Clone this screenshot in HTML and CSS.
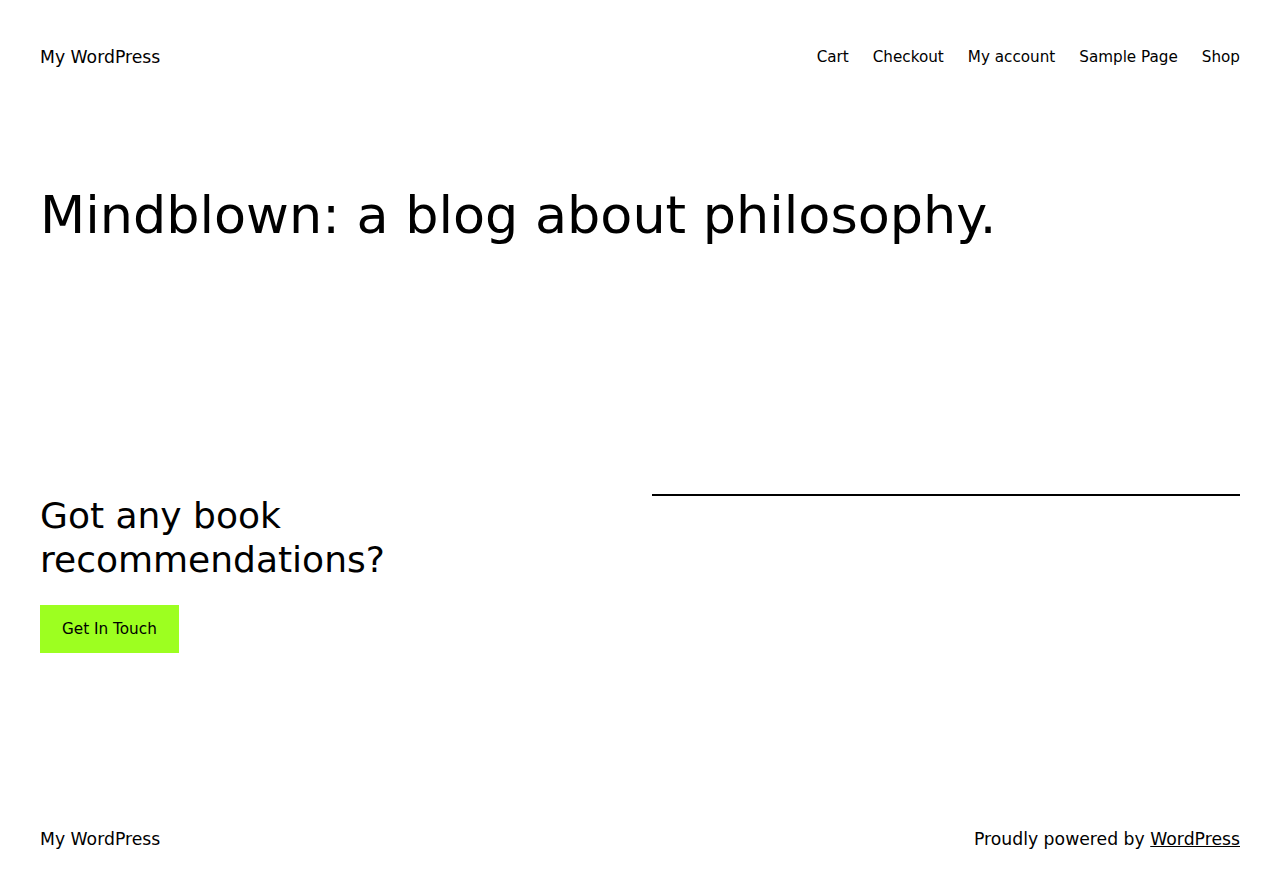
FILE: index.html
```html
<!DOCTYPE html>
<html lang="en">
<head>
    <meta charset="UTF-8">
    <meta name="viewport" content="width=device-width, initial-scale=1.0">
    <title>My WordPress</title>
    <link rel="stylesheet" href="styles.css">
</head>
<body>
    <header class="site-header">
        <a class="site-title" href="#">My WordPress</a>
        <nav class="site-nav">
            <a href="#">Cart</a>
            <a href="#">Checkout</a>
            <a href="#">My account</a>
            <a href="#">Sample Page</a>
            <a href="#">Shop</a>
        </nav>
    </header>

    <main class="site-main">
        <h1 class="hero-title">Mindblown: a blog about philosophy.</h1>

        <section class="cta">
            <div class="cta-left">
                <h2>Got any book recommendations?</h2>
                <a class="button" href="#">Get In Touch</a>
            </div>
            <div class="cta-right">
                <hr class="separator">
            </div>
        </section>
    </main>

    <footer class="site-footer">
        <a class="site-title" href="#">My WordPress</a>
        <p class="credit">Proudly powered by <a href="#">WordPress</a></p>
    </footer>
</body>
</html>
```

FILE: styles.css
```css
body {
    margin: 0;
    font-family: "DejaVu Sans", sans-serif;
    color: #000;
    background: #fff;
}
a {
    color: #000;
    text-decoration: none;
}
.site-header {
    display: flex;
    justify-content: space-between;
    align-items: center;
    padding: 44px 40px 0;
}
.site-title {
    font-size: 17.25px;
    line-height: 27px;
}
.site-nav {
    display: flex;
    gap: 24px;
    font-size: 15.2px;
    line-height: 27px;
}
.site-main {
    padding: 0 40px;
}
.hero-title {
    margin: 113px 0 0;
    font-size: 52.4px;
    font-weight: 400;
    line-height: 1.2;
}
.cta {
    display: grid;
    grid-template-columns: 1fr 1fr;
    gap: 24px;
    margin-top: 247px;
}
.cta h2 {
    margin: 0;
    font-size: 36px;
    font-weight: 400;
    line-height: 44px;
    max-width: 420px;
}
.button {
    display: inline-block;
    margin-top: 23px;
    padding: 11px 22px;
    font-size: 15.25px;
    line-height: 26px;
    background: #9dff20;
}
.separator {
    margin: 0;
    border: none;
    border-top: 2px solid #000;
}
.site-footer {
    display: flex;
    justify-content: space-between;
    align-items: center;
    margin-top: 173px;
    padding: 0 40px;
}
.credit {
    margin: 0;
    font-size: 17.25px;
    line-height: 27px;
}
.credit a {
    text-decoration: underline;
}
```
